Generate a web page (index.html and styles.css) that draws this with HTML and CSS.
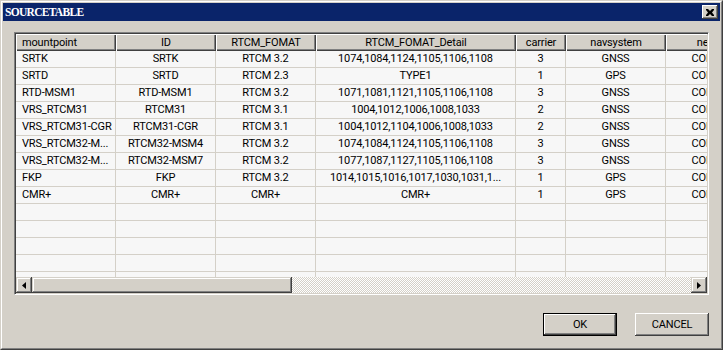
FILE: index.html
```html
<!DOCTYPE html>
<html>
<head>
<meta charset="utf-8">
<link rel="stylesheet" href="styles.css">
</head>
<body>
<div class="window">
  <div class="window-inner">
    <div class="titlebar">
      <span class="title">SOURCETABLE</span>
      <div class="close-btn">
        <svg width="8" height="7" viewBox="0 0 8 7"><path d="M0 0h2l2 2 2-2h2v1l-2 2.5 2 2.5v1h-2l-2-2-2 2h-2v-1l2-2.5-2-2.5z" fill="#000"/></svg>
      </div>
    </div>
    <div class="body">
      <div class="list">
        <div class="viewport">
          <div class="row head">
            <div class="hc left">mountpoint</div>
            <div class="hc">ID</div>
            <div class="hc">RTCM_FOMAT</div>
            <div class="hc">RTCM_FOMAT_Detail</div>
            <div class="hc">carrier</div>
            <div class="hc">navsystem</div>
            <div class="hc">network</div>
          </div>
          <div class="row"><div class="c left">SRTK</div><div class="c">SRTK</div><div class="c">RTCM 3.2</div><div class="c">1074,1084,1124,1105,1106,1108</div><div class="c">3</div><div class="c">GNSS</div><div class="c">CORSNET</div></div>
          <div class="row"><div class="c left">SRTD</div><div class="c">SRTD</div><div class="c">RTCM 2.3</div><div class="c">TYPE1</div><div class="c">1</div><div class="c">GPS</div><div class="c">CORSNET</div></div>
          <div class="row"><div class="c left">RTD-MSM1</div><div class="c">RTD-MSM1</div><div class="c">RTCM 3.2</div><div class="c">1071,1081,1121,1105,1106,1108</div><div class="c">3</div><div class="c">GNSS</div><div class="c">CORSNET</div></div>
          <div class="row"><div class="c left">VRS_RTCM31</div><div class="c">RTCM31</div><div class="c">RTCM 3.1</div><div class="c">1004,1012,1006,1008,1033</div><div class="c">2</div><div class="c">GNSS</div><div class="c">CORSNET</div></div>
          <div class="row"><div class="c left">VRS_RTCM31-CGR</div><div class="c">RTCM31-CGR</div><div class="c">RTCM 3.1</div><div class="c">1004,1012,1104,1006,1008,1033</div><div class="c">2</div><div class="c">GNSS</div><div class="c">CORSNET</div></div>
          <div class="row"><div class="c left">VRS_RTCM32-M...</div><div class="c">RTCM32-MSM4</div><div class="c">RTCM 3.2</div><div class="c">1074,1084,1124,1105,1106,1108</div><div class="c">3</div><div class="c">GNSS</div><div class="c">CORSNET</div></div>
          <div class="row"><div class="c left">VRS_RTCM32-M...</div><div class="c">RTCM32-MSM7</div><div class="c">RTCM 3.2</div><div class="c">1077,1087,1127,1105,1106,1108</div><div class="c">3</div><div class="c">GNSS</div><div class="c">CORSNET</div></div>
          <div class="row"><div class="c left">FKP</div><div class="c">FKP</div><div class="c">RTCM 3.2</div><div class="c">1014,1015,1016,1017,1030,1031,1...</div><div class="c">1</div><div class="c">GPS</div><div class="c">CORSNET</div></div>
          <div class="row"><div class="c left">CMR+</div><div class="c">CMR+</div><div class="c">CMR+</div><div class="c">CMR+</div><div class="c">1</div><div class="c">GPS</div><div class="c">CORSNET</div></div>
          <div class="row"><div class="c"></div><div class="c"></div><div class="c"></div><div class="c"></div><div class="c"></div><div class="c"></div><div class="c"></div></div>
          <div class="row"><div class="c"></div><div class="c"></div><div class="c"></div><div class="c"></div><div class="c"></div><div class="c"></div><div class="c"></div></div>
          <div class="row"><div class="c"></div><div class="c"></div><div class="c"></div><div class="c"></div><div class="c"></div><div class="c"></div><div class="c"></div></div>
          <div class="row"><div class="c"></div><div class="c"></div><div class="c"></div><div class="c"></div><div class="c"></div><div class="c"></div><div class="c"></div></div>
          <div class="row"><div class="c"></div><div class="c"></div><div class="c"></div><div class="c"></div><div class="c"></div><div class="c"></div><div class="c"></div></div>
        </div>
        <div class="hscroll">
          <div class="sb-btn">
            <svg width="4" height="7" viewBox="0 0 4 7"><path d="M4 0v7L0 3.5z" fill="#000"/></svg>
          </div>
          <div class="sb-thumb"></div>
          <div class="sb-track"></div>
          <div class="sb-btn">
            <svg width="4" height="7" viewBox="0 0 4 7"><path d="M0 0v7l4-3.5z" fill="#000"/></svg>
          </div>
        </div>
      </div>
      <div class="buttons">
        <div class="btn default"><span>OK</span></div>
        <div class="btn"><span>CANCEL</span></div>
      </div>
    </div>
  </div>
</div>
</body>
</html>
```

FILE: styles.css
```css
html, body {
  margin: 0;
  padding: 0;
  background: #D4D0C8;
}
body {
  font-family: Roboto, "Liberation Sans", Arial, sans-serif;
  font-size: 11px;
  letter-spacing: -0.15px;
  color: #000;
}
.window {
  width: 723px;
  height: 350px;
  box-sizing: border-box;
  border: 1px solid;
  border-color: #D4D0C8 #404040 #404040 #D4D0C8;
  background: #D4D0C8;
}
.window-inner {
  height: 100%;
  box-sizing: border-box;
  border: 1px solid;
  border-color: #FFFFFF #808080 #808080 #FFFFFF;
  padding: 1px;
  display: flex;
  flex-direction: column;
}
.titlebar {
  height: 18px;
  flex: none;
  background: #0A246A;
  display: flex;
  align-items: center;
  justify-content: space-between;
  padding: 0 2px;
}
.title {
  color: #fff;
  font-family: "Liberation Serif", "DejaVu Serif", serif;
  font-weight: bold;
  font-size: 11.5px;
  letter-spacing: -0.7px;
  line-height: 18px;
}
.close-btn {
  width: 16px;
  height: 14px;
  box-sizing: border-box;
  background: #D4D0C8;
  box-shadow: inset -1px -1px #404040, inset 1px 1px #fff, inset -2px -2px #808080;
  display: flex;
  align-items: center;
  justify-content: center;
}
.body {
  flex: 1;
  padding: 11px;
  display: flex;
  flex-direction: column;
}
.list {
  height: 263px;
  box-sizing: border-box;
  border: 1px solid;
  border-color: #808080 #FFFFFF #FFFFFF #808080;
  box-shadow: inset 1px 1px #404040, inset -1px -1px #D4D0C8;
  padding: 1px;
  display: flex;
  flex-direction: column;
}
.viewport {
  flex: 1;
  overflow: hidden;
  background: #F7F7F7;
}
.row {
  display: grid;
  grid-template-columns: 100px 100px 100px 200px 50px 100px 100px;
  height: 17px;
  width: 750px;
}
.c {
  box-sizing: border-box;
  border-right: 1px solid #D4D0C8;
  border-bottom: 1px solid #D4D0C8;
  text-align: center;
  line-height: 16px;
  white-space: nowrap;
  overflow: hidden;
}
.hc {
  box-sizing: border-box;
  background: #D4D0C8;
  box-shadow: inset 1px 1px #fff, inset -1px -1px #404040, inset -2px -2px #808080;
  text-align: center;
  line-height: 17px;
  white-space: nowrap;
  overflow: hidden;
}
.c.left, .hc.left {
  text-align: left;
  padding-left: 6px;
}
.hscroll {
  height: 16px;
  flex: none;
  display: flex;
}
.sb-btn {
  width: 16px;
  height: 16px;
  box-sizing: border-box;
  background: #D4D0C8;
  box-shadow: inset -1px -1px #404040, inset 1px 1px #D4D0C8, inset -2px -2px #808080, inset 2px 2px #fff;
  display: flex;
  align-items: center;
  justify-content: center;
}
.sb-thumb {
  width: 260px;
  height: 16px;
  box-sizing: border-box;
  background: #D4D0C8;
  box-shadow: inset -1px -1px #404040, inset 1px 1px #D4D0C8, inset -2px -2px #808080, inset 2px 2px #fff;
}
.sb-track {
  flex: 1;
  background: repeating-conic-gradient(#FFFFFF 0 25%, #D4D0C8 0 50%) 0 0 / 2px 2px;
}
.buttons {
  margin-top: 18px;
  display: flex;
  justify-content: flex-end;
  gap: 18px;
}
.btn {
  width: 74px;
  height: 23px;
  box-sizing: border-box;
  background: #D4D0C8;
  box-shadow: inset -1px -1px #404040, inset 1px 1px #fff, inset -2px -2px #808080;
  display: flex;
  align-items: center;
  justify-content: center;
}
.btn.default {
  border: 1px solid #000;
}
```
